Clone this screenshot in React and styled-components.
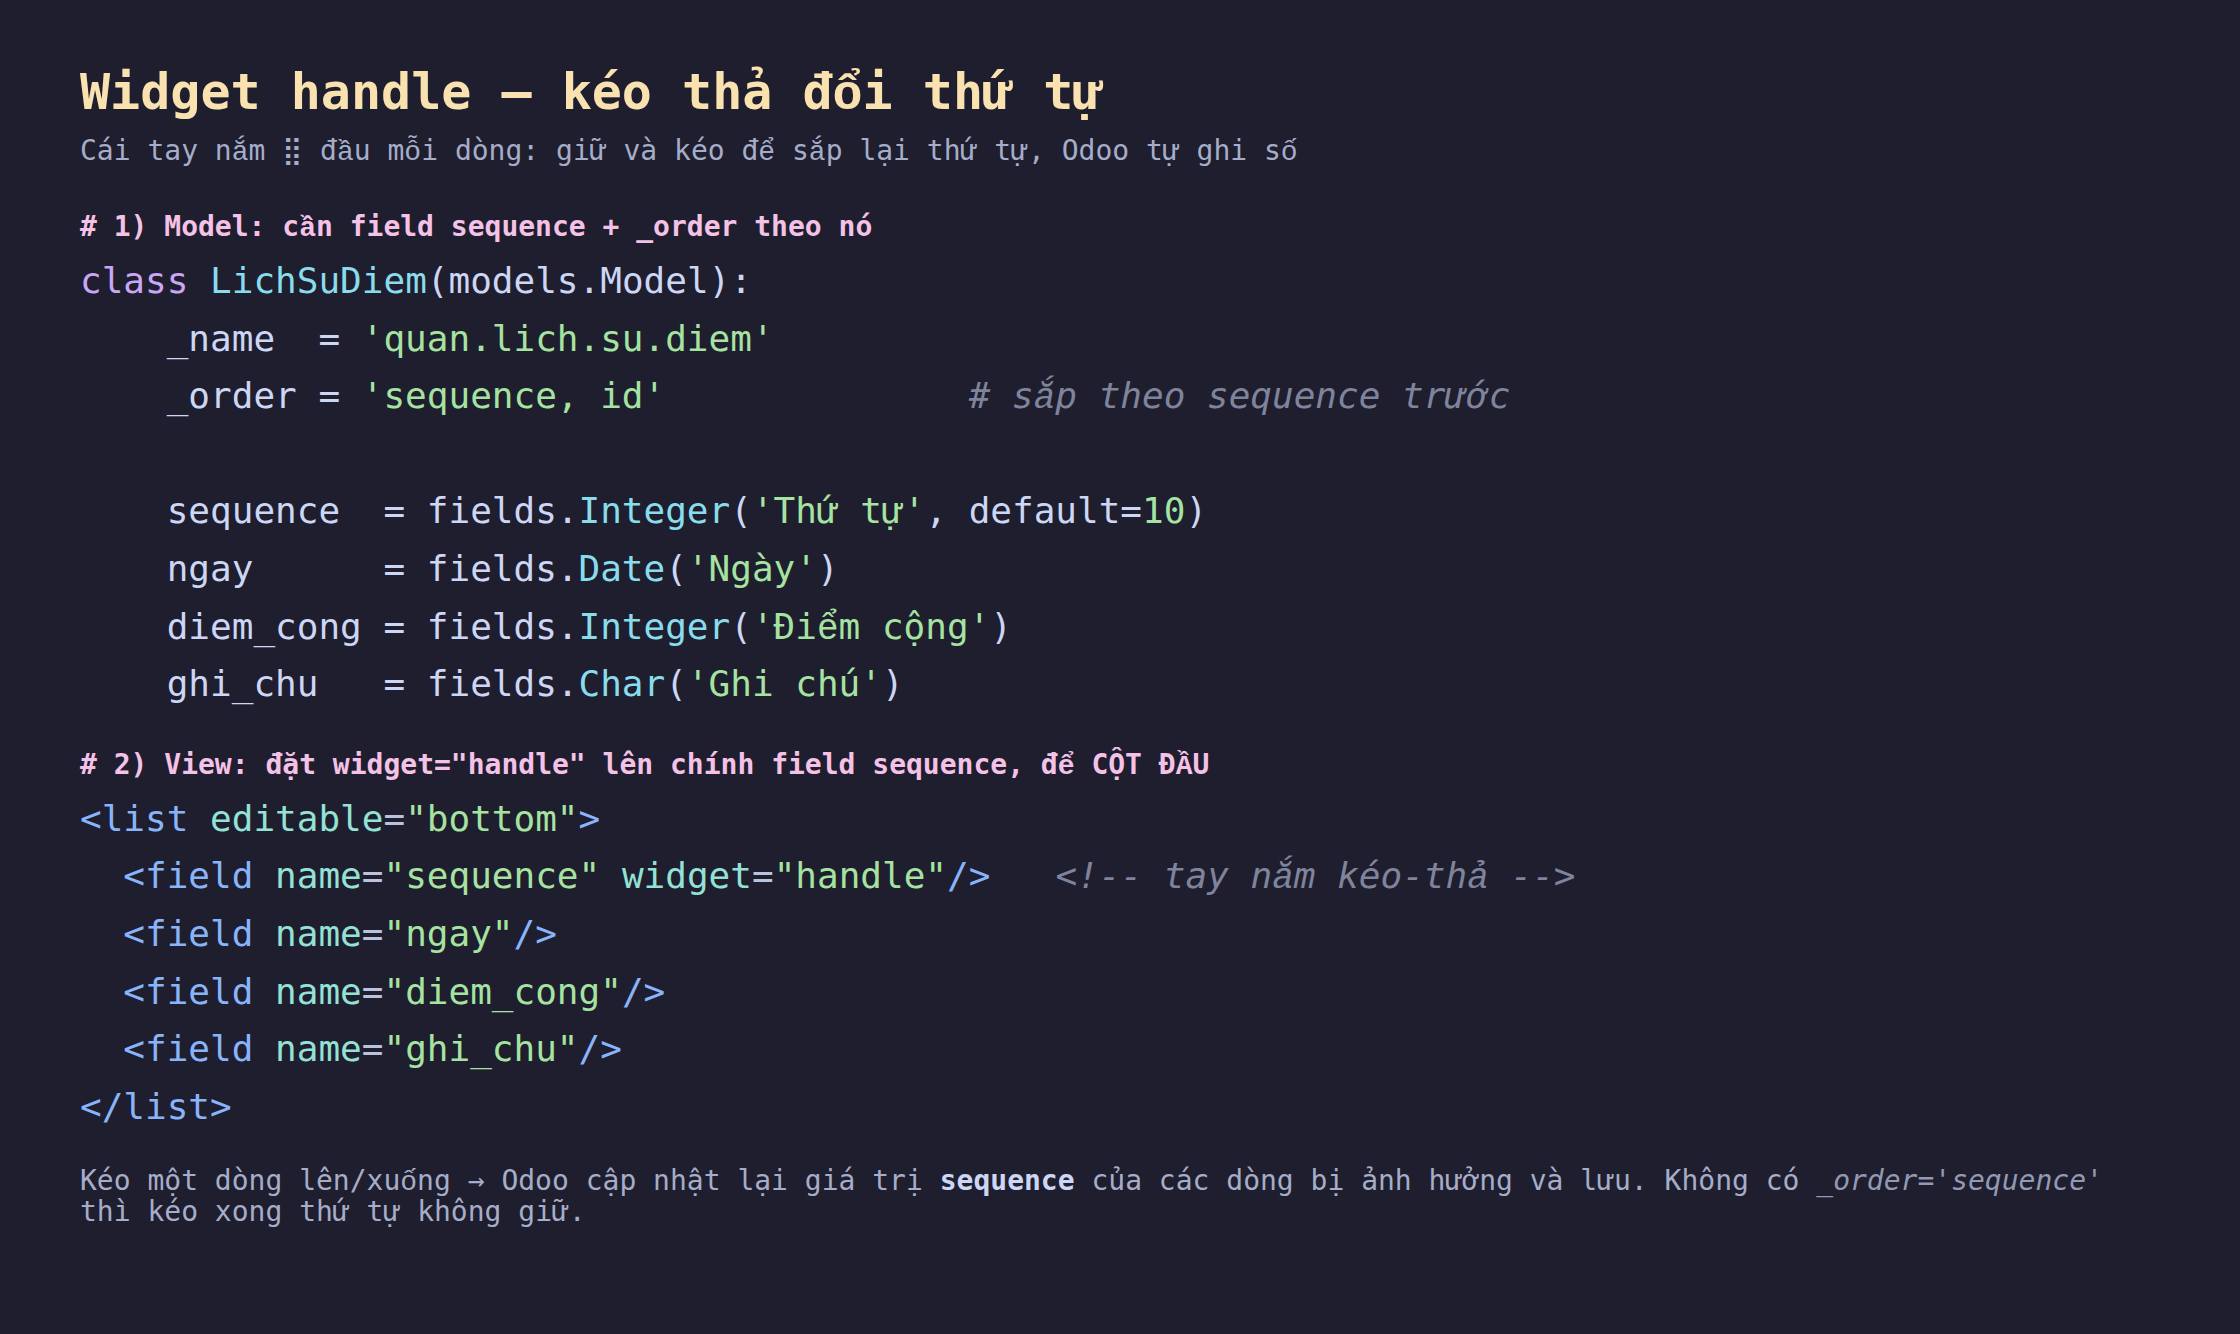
import React from 'react';
import styled, { createGlobalStyle } from 'styled-components';

const GlobalStyle = createGlobalStyle`
  html, body {
    margin: 0;
    padding: 0;
    background: #1e1e2e;
  }
  body {
    font-family: "DejaVu Sans Mono", "Liberation Mono", monospace;
  }
`;

const colors = {
  text: '#cdd6f4',
  kw: '#cba6f7',
  cls: '#89dceb',
  fn: '#89dceb',
  str: '#a6e3a1',
  num: '#a6e3a1',
  com: '#7f849c',
  tag: '#89b4fa',
  attr: '#94e2d5',
  eq: '#bac2de',
};

const STACKED = 'ầấẩẫằắẳẵềếểễồốổỗẦẤẨẪẰẮẲẴỀẾỂỄỒỐỔỖ';
const OBLIQUE_EXTRA = 'ả';

const Glyph = styled.span`
  font-family: "Liberation Mono", "DejaVu Sans Mono", monospace;
  line-height: 0;
`;

const fix = (text, italic = false) => {
  const set = italic ? STACKED + OBLIQUE_EXTRA : STACKED;
  const out = [];
  let buf = '';
  [...text].forEach((c, i) => {
    if (set.includes(c)) {
      if (buf) out.push(buf);
      buf = '';
      out.push(<Glyph key={i}>{c}</Glyph>);
    } else {
      buf += c;
    }
  });
  if (buf) out.push(buf);
  return out;
};

const Page = styled.div`
  min-height: 1334px;
  box-sizing: border-box;
  padding: 62px 80px 40px;
  background: #1e1e2e;
  display: flex;
  flex-direction: column;
`;

const Title = styled.h1`
  margin: 0;
  font-size: 50px;
  line-height: 60px;
  font-weight: 700;
  color: #f9e2af;
`;

const Subtitle = styled.div`
  margin-top: 11px;
  font-size: 28px;
  line-height: 36px;
  color: #a6adc8;
`;

const SectionComment = styled.div`
  margin-top: ${({ $gap }) => $gap}px;
  font-size: 28px;
  line-height: 36px;
  font-weight: 700;
  color: #f5c2e7;
`;

const Code = styled.pre`
  margin: 7px 0 0;
  font-family: inherit;
  font-size: 36px;
  line-height: 57.6px;
  color: ${colors.text};
  white-space: pre;
`;

const Tok = styled.span`
  color: ${({ $k }) => colors[$k] || colors.text};
  font-style: ${({ $k }) => ($k === 'com' ? 'italic' : 'normal')};
`;

const Footer = styled.p`
  margin: 30px 0 0;
  font-size: 28px;
  line-height: 31px;
  color: #a6adc8;
`;

const Strong = styled.b`
  color: #cdd6f4;
  font-weight: 700;
`;

const Em = styled.i`
  color: #9399b2;
`;

const python = [
  [['kw', 'class'], ['', ' '], ['cls', 'LichSuDiem'], ['', '(models.Model):']],
  [['', '    _name  = '], ['str', "'quan.lich.su.diem'"]],
  [['', '    _order = '], ['str', "'sequence, id'"], ['', '              '], ['com', '# sắp theo sequence trước']],
  [['', ' ']],
  [['', '    sequence  = fields.'], ['fn', 'Integer'], ['', '('], ['str', "'Thứ tự'"], ['', ', default='], ['num', '10'], ['', ')']],
  [['', '    ngay      = fields.'], ['fn', 'Date'], ['', '('], ['str', "'Ngày'"], ['', ')']],
  [['', '    diem_cong = fields.'], ['fn', 'Integer'], ['', '('], ['str', "'Điểm cộng'"], ['', ')']],
  [['', '    ghi_chu   = fields.'], ['fn', 'Char'], ['', '('], ['str', "'Ghi chú'"], ['', ')']],
];

const field = (name, extra) => {
  const toks = [
    ['tag', '  <field '],
    ['attr', 'name'],
    ['eq', '='],
    ['str', `"${name}"`],
  ];
  if (extra) {
    toks.push(['', ' '], ['attr', 'widget'], ['eq', '='], ['str', '"handle"']);
  }
  toks.push(['tag', '/>']);
  if (extra) toks.push(['', '   '], ['com', '<!-- tay nắm kéo-thả -->']);
  return toks;
};

const xml = [
  [['tag', '<list '], ['attr', 'editable'], ['eq', '='], ['str', '"bottom"'], ['tag', '>']],
  field('sequence', true),
  field('ngay'),
  field('diem_cong'),
  field('ghi_chu'),
  [['tag', '</list>']],
];

const CodeLines = ({ lines }) => (
  <Code>
    {lines.map((line, i) => (
      <React.Fragment key={i}>
        {line.map(([k, t], j) => (
          <Tok key={j} $k={k}>{fix(t, k === 'com')}</Tok>
        ))}
        {i < lines.length - 1 ? '\n' : ''}
      </React.Fragment>
    ))}
  </Code>
);

export default function App() {
  return (
    <>
      <GlobalStyle />
      <Page>
        <Title>{fix('Widget handle — kéo thả đổi thứ tự')}</Title>
        <Subtitle>{fix('Cái tay nắm ⣿ đầu mỗi dòng: giữ và kéo để sắp lại thứ tự, Odoo tự ghi số')}</Subtitle>

        <SectionComment $gap={40}>{fix('# 1) Model: cần field sequence + _order theo nó')}</SectionComment>
        <CodeLines lines={python} />

        <SectionComment $gap={34}>
          {fix('# 2) View: đặt widget="handle" lên chính field sequence, để CỘT ĐẦU')}
        </SectionComment>
        <CodeLines lines={xml} />

        <Footer>
          {fix('Kéo một dòng lên/xuống → Odoo cập nhật lại giá trị ')}
          <Strong>sequence</Strong>
          {' của các dòng bị ảnh hưởng và lưu. Không có '}
          <Em>_order='sequence'</Em>
          {' thì kéo xong thứ tự không giữ.'}
        </Footer>
      </Page>
    </>
  );
}
